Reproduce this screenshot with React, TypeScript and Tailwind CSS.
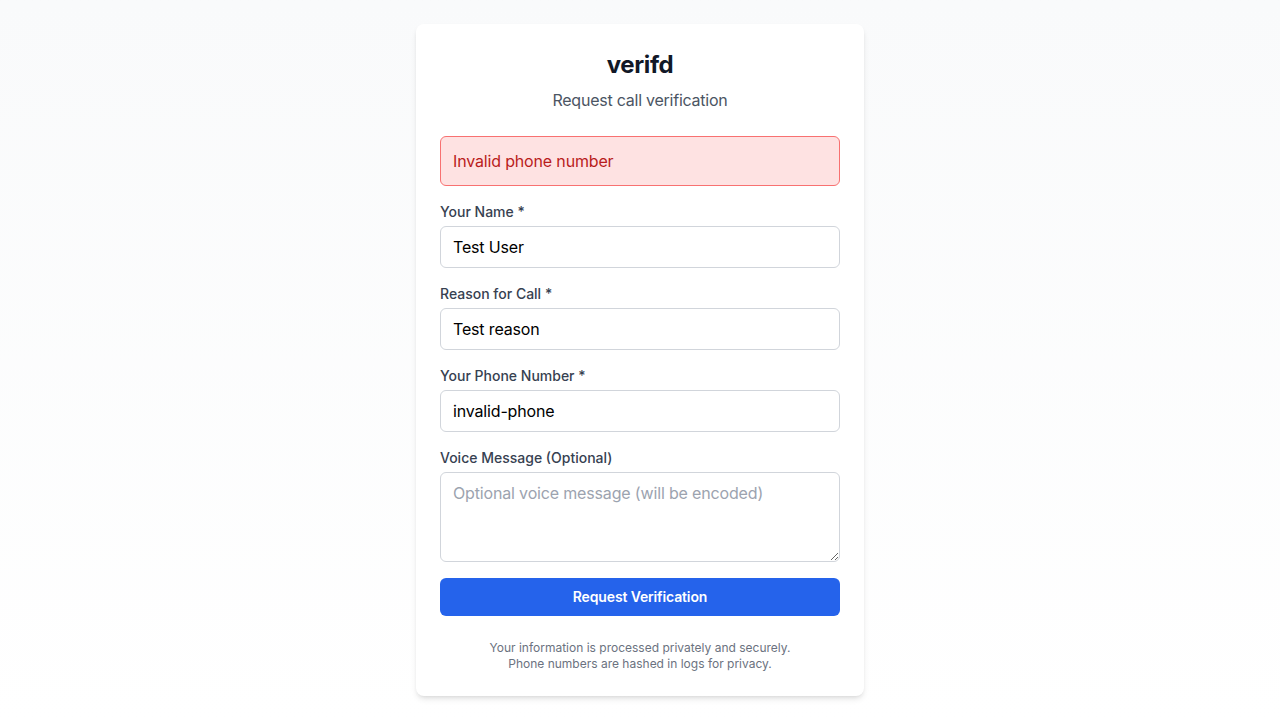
import React from "react";

export default function App() {
  const label = "block text-sm font-medium text-[#374151]";
  const input =
    "mt-1 block w-full rounded-md border border-[#d1d5db] px-3 py-2 text-base tracking-[-0.01em] text-black outline-none placeholder:text-[#9ca3af]";
  return (
    <div
      className="min-h-screen bg-gradient-to-b from-[#f9fafb] to-white pt-6"
      style={{ fontFamily: "Inter, 'Noto Sans', sans-serif" }}
    >
      <div className="mx-auto w-[448px] rounded-lg bg-white p-6 shadow-md">
        <h1 className="pt-[1px] text-center text-2xl font-bold tracking-[-0.015em] text-[#111827]">verifd</h1>
        <p className="mt-[7px] text-center text-base tracking-[-0.015em] text-[#4b5563]">Request call verification</p>
        <div className="mt-6 rounded-md border border-[#f87171] bg-[#fee2e2] p-3 text-base tracking-[-0.01em] text-[#b91c1c]">
          Invalid phone number
        </div>
        <form className="mt-4 space-y-4" onSubmit={(e) => e.preventDefault()}>
          <div>
            <label className={label}>Your Name *</label>
            <input className={input} defaultValue="Test User" />
          </div>
          <div>
            <label className={label}>Reason for Call *</label>
            <input className={input} defaultValue="Test reason" />
          </div>
          <div>
            <label className={label}>Your Phone Number *</label>
            <input className={input} defaultValue="invalid-phone" />
          </div>
          <div>
            <label className={label}>Voice Message (Optional)</label>
            <textarea
              rows={3}
              className={input}
              placeholder="Optional voice message (will be encoded)"
            />
          </div>
          <button
            type="submit"
            className="block h-[38px] w-full rounded-md bg-[#2563eb] text-sm font-semibold tracking-[-0.01em] text-white"
          >
            Request Verification
          </button>
        </form>
        <div className="mt-6 text-center text-xs text-[#6b7280]">
          <p>Your information is processed privately and securely.</p>
          <p>Phone numbers are hashed in logs for privacy.</p>
        </div>
      </div>
    </div>
  );
}
